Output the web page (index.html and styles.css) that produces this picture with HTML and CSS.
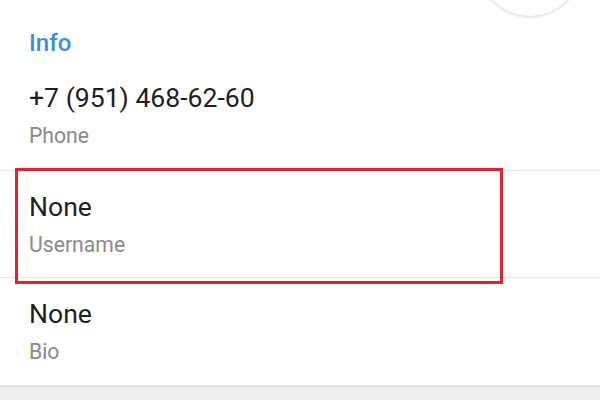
FILE: index.html
```html
<!DOCTYPE html>
<html>
<head>
<meta charset="utf-8">
<link rel="stylesheet" href="styles.css">
</head>
<body>
<div class="screen">
  <div class="fab"></div>
  <section class="info">
    <div class="header">Info</div>
    <div class="row first">
      <div class="primary">+7 (951) 468-62-60</div>
      <div class="secondary">Phone</div>
    </div>
    <div class="row">
      <div class="primary">None</div>
      <div class="secondary">Username</div>
    </div>
    <div class="row last">
      <div class="primary">None</div>
      <div class="secondary">Bio</div>
    </div>
  </section>
  <div class="footer"></div>
  <div class="highlight"></div>
</div>
</body>
</html>
```
FILE: styles.css
```css
html, body {
  margin: 0;
  padding: 0;
}
body {
  width: 600px;
  height: 400px;
  overflow: hidden;
  background: #ffffff;
  font-family: Roboto, "Noto Sans", sans-serif;
}
.screen {
  position: relative;
  width: 600px;
  height: 400px;
  display: flex;
  flex-direction: column;
}
.info {
  display: flex;
  flex-direction: column;
  background: #ffffff;
}
.header {
  padding: 29px 29px 5px 29px;
  font-size: 24px;
  line-height: 28px;
  font-weight: 500;
  color: #3d8fd2;
}
.row {
  padding: 20px 29px 18px 29px;
  display: flex;
  flex-direction: column;
}
.row.first {
  padding-bottom: 20px;
}
.row.last {
  padding-bottom: 19px;
}
.row + .row {
  border-top: 1px solid #e2e2e2;
}
.primary {
  font-size: 26.6px;
  line-height: 32px;
  color: #1f1f1f;
}
.secondary {
  margin-top: 8px;
  font-size: 21.2px;
  line-height: 28px;
  color: #8a8a8a;
}
.footer {
  flex: 1;
  background: #efefef;
  border-top: 1px solid #e0e0e0;
  box-shadow: inset 0 2px 2px rgba(0,0,0,0.04);
}
.fab {
  position: absolute;
  left: 478px;
  top: -87px;
  width: 102px;
  height: 102px;
  border-radius: 50%;
  background: #ffffff;
  border: 1px solid #e4e4e4;
  box-shadow: 0 1px 2px rgba(0,0,0,0.08);
}
.highlight {
  position: absolute;
  left: 15px;
  top: 168px;
  width: 482px;
  height: 110px;
  border: 3px solid #e3222f;
}
```
